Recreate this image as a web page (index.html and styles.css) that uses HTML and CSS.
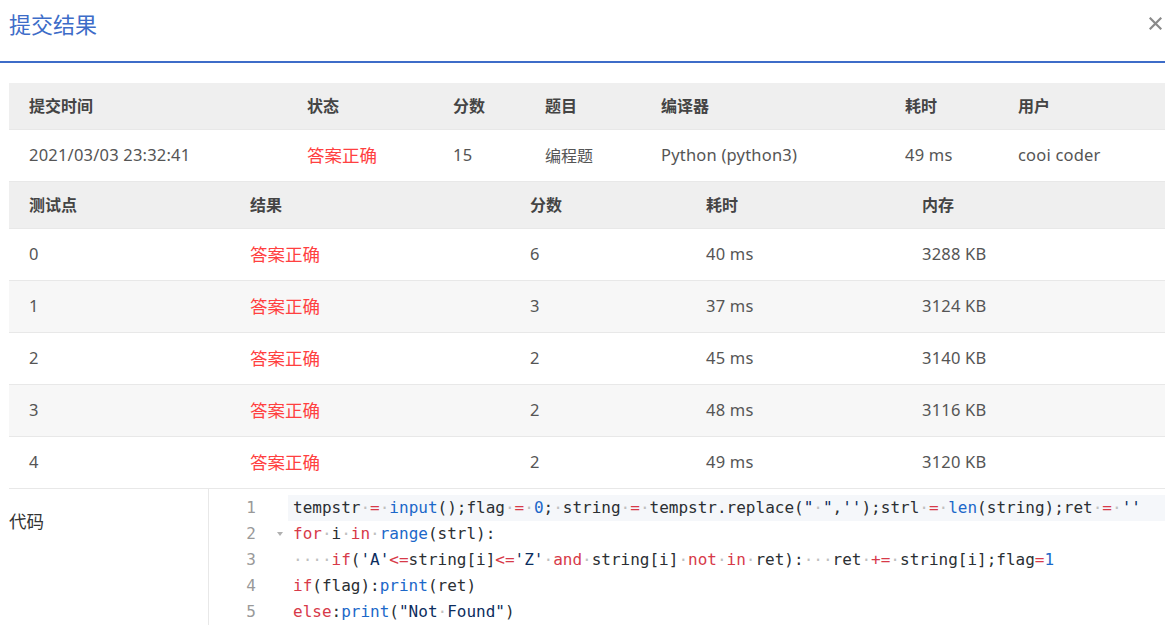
FILE: index.html
```html
<!DOCTYPE html>
<html lang="zh-CN">
<head>
<meta charset="utf-8">
<title>提交结果</title>
<link rel="stylesheet" href="styles.css">
</head>
<body>
<div class="modal">
  <div class="modal-head">
    <h2 class="title">提交结果</h2>
    <span class="close" aria-label="关闭"><svg width="13" height="13" viewBox="0 0 13 13"><path d="M1.5 1.5 L11.5 11.5 M11.5 1.5 L1.5 11.5" stroke="#8a8a8a" stroke-width="2.2" stroke-linecap="square" fill="none"/></svg></span>
  </div>
  <div class="modal-body">
    <div class="grid summary">
      <div class="row head">
        <div class="cell">提交时间</div><div class="cell">状态</div><div class="cell">分数</div><div class="cell">题目</div><div class="cell">编译器</div><div class="cell">耗时</div><div class="cell">用户</div>
      </div>
      <div class="row">
        <div class="cell">2021/03/03 23:32:41</div><div class="cell ok">答案正确</div><div class="cell">15</div><div class="cell cjk">编程题</div><div class="cell">Python (python3)</div><div class="cell">49 ms</div><div class="cell">cooi coder</div>
      </div>
    </div>
    <div class="grid cases">
      <div class="row head">
        <div class="cell">测试点</div><div class="cell">结果</div><div class="cell">分数</div><div class="cell">耗时</div><div class="cell">内存</div>
      </div>
      <div class="row">
        <div class="cell">0</div><div class="cell ok">答案正确</div><div class="cell">6</div><div class="cell">40 ms</div><div class="cell">3288 KB</div>
      </div>
      <div class="row alt">
        <div class="cell">1</div><div class="cell ok">答案正确</div><div class="cell">3</div><div class="cell">37 ms</div><div class="cell">3124 KB</div>
      </div>
      <div class="row">
        <div class="cell">2</div><div class="cell ok">答案正确</div><div class="cell">2</div><div class="cell">45 ms</div><div class="cell">3140 KB</div>
      </div>
      <div class="row alt">
        <div class="cell">3</div><div class="cell ok">答案正确</div><div class="cell">2</div><div class="cell">48 ms</div><div class="cell">3116 KB</div>
      </div>
      <div class="row">
        <div class="cell">4</div><div class="cell ok">答案正确</div><div class="cell">2</div><div class="cell">49 ms</div><div class="cell">3120 KB</div>
      </div>
    </div>
    <div class="code-section">
      <div class="code-label">代码</div>
      <div class="editor">
        <div class="line">
          <div class="gutter"><span class="num">1</span><span class="fold"></span></div>
          <div class="text current">tempstr<span class="inv">·</span><span class="kw">=</span><span class="inv">·</span><span class="fn">input</span>();flag<span class="inv">·</span><span class="kw">=</span><span class="inv">·</span><span class="nm">0</span>;<span class="inv">·</span>string<span class="inv">·</span><span class="kw">=</span><span class="inv">·</span>tempstr.replace(<span class="st">"</span><span class="inv">·</span><span class="st">"</span>,<span class="st">''</span>);strl<span class="inv">·</span><span class="kw">=</span><span class="inv">·</span><span class="fn">len</span>(string);ret<span class="inv">·</span><span class="kw">=</span><span class="inv">·</span><span class="st">''</span></div>
        </div>
        <div class="line">
          <div class="gutter"><span class="num">2</span><span class="fold"><span class="tri"></span></span></div>
          <div class="text"><span class="kw">for</span><span class="inv">·</span>i<span class="inv">·</span><span class="kw">in</span><span class="inv">·</span><span class="fn">range</span>(strl):</div>
        </div>
        <div class="line">
          <div class="gutter"><span class="num">3</span><span class="fold"></span></div>
          <div class="text"><span class="inv">····</span><span class="kw">if</span>(<span class="st">'A'</span><span class="kw">&lt;=</span>string[i]<span class="kw">&lt;=</span><span class="st">'Z'</span><span class="inv">·</span><span class="kw">and</span><span class="inv">·</span>string[i]<span class="inv">·</span><span class="kw">not</span><span class="inv">·</span><span class="kw">in</span><span class="inv">·</span>ret):<span class="inv">···</span>ret<span class="inv">·</span><span class="kw">+=</span><span class="inv">·</span>string[i];flag<span class="kw">=</span><span class="nm">1</span></div>
        </div>
        <div class="line">
          <div class="gutter"><span class="num">4</span><span class="fold"></span></div>
          <div class="text"><span class="kw">if</span>(flag):<span class="fn">print</span>(ret)</div>
        </div>
        <div class="line">
          <div class="gutter"><span class="num">5</span><span class="fold"></span></div>
          <div class="text"><span class="kw">else</span>:<span class="fn">print</span>(<span class="st">"Not</span><span class="inv">·</span><span class="st">Found"</span>)</div>
        </div>
      </div>
    </div>
  </div>
</div>
</body>
</html>
```
FILE: styles.css
```css
* { box-sizing: border-box; }
html, body { margin: 0; padding: 0; background: #fff; }
body {
  font-family: "Noto Sans", "Noto Sans CJK SC", sans-serif;
  font-size: 16px;
  color: #555;
  overflow: hidden;
}
.modal { width: 1165px; }
.modal-head {
  height: 63px;
  border-bottom: 2px solid #3d6cc8;
  display: flex;
  align-items: flex-start;
  justify-content: space-between;
  padding: 0 3px 0 9px;
}
.title {
  margin: 0;
  font-family: "Noto Sans CJK SC", sans-serif;
  font-weight: normal;
  font-size: 22px;
  line-height: 47px;
  color: #3d6cc8;
}
.close {
  display: flex;
  width: 13px;
  height: 13px;
  margin-top: 17px;
}
.modal-body { padding: 20px 0 0 9px; }
.grid { width: 1156px; }
.row {
  display: grid;
  height: 52px;
  align-items: center;
  border-bottom: 1px solid #e8e8e8;
}
.row.head {
  height: 47px;
  background: #efefef;
  font-weight: bold;
  color: #444;
}
.row.alt { background: #f7f7f7; }
.summary .row { grid-template-columns: 278px 146px 92px 116px 244px 113px 1fr; }
.cases .row { grid-template-columns: 221px 280px 176px 216px 1fr; }
.cell {
  padding: 0 0 2px 20px;
  line-height: 24px;
  white-space: nowrap;
  font-size: 16.5px;
  letter-spacing: 0.2px;
}
.head .cell,
.cell.cjk {
  font-family: "Noto Sans CJK SC", sans-serif;
  font-size: 16px;
  letter-spacing: 0;
}
.cell.ok {
  color: #ff4040;
  font-family: "Noto Sans CJK SC", sans-serif;
  font-size: 17.5px;
  letter-spacing: 0;
}
.code-section {
  display: grid;
  grid-template-columns: 199px 1fr;
}
.code-label {
  font-family: "Noto Sans CJK SC", sans-serif;
  font-size: 17.5px;
  line-height: 26px;
  color: #333;
  padding-top: 19px;
}
.editor {
  border-left: 1px solid #e8e8e8;
  padding-top: 6px;
  font-family: "DejaVu Sans Mono", monospace;
  font-size: 16px;
}
.line {
  display: flex;
  height: 26px;
  line-height: 26px;
}
.gutter {
  width: 79px;
  flex: none;
  display: flex;
  justify-content: flex-end;
  color: #999;
}
.fold {
  width: 32px;
  display: flex;
  align-items: center;
  padding-left: 21px;
}
.tri {
  width: 0;
  height: 0;
  border-left: 3px solid transparent;
  border-right: 3px solid transparent;
  border-top: 4px solid #b0b0b0;
}
.text {
  flex: 1;
  white-space: pre;
  color: #2b2f33;
  padding: 0 0 0 5px;
}
.text.current { background: #f5f7fa; }
.kw { color: #d73a49; }
.fn { color: #1c68c9; }
.nm { color: #1c68c9; }
.st { color: #0c2d5e; }
.inv { color: #c0c0c0; }
```
